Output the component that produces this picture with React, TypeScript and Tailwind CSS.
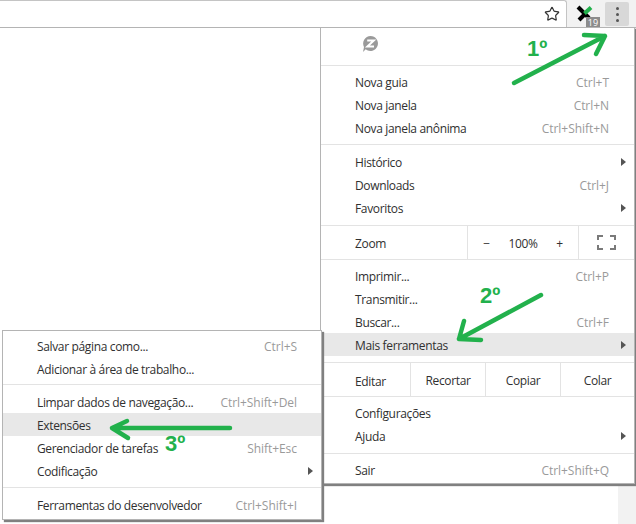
import { Star } from 'lucide-react';

interface MenuRowProps {
  label: string;
  shortcut?: string;
  arrow?: boolean;
  active?: boolean;
  inset?: string;
}

const MenuRow = ({ label, shortcut, arrow, active, inset = 'pl-[34px] pr-[25px]' }: MenuRowProps) => (
  <div className={`relative flex h-[23px] items-center justify-between pt-[2px] ${inset} ${active ? 'bg-[#e8e8e8]' : ''}`}>
    <span>{label}</span>
    {shortcut && <span className="tracking-[-0.05px] text-[#9a9a9a]">{shortcut}</span>}
    {arrow && (
      <span className="absolute right-[8px] top-[8px] h-0 w-0 border-y-[4px] border-l-[5px] border-y-transparent border-l-[#555]" />
    )}
  </div>
);

const Separator = () => <div className="h-px bg-[#e3e3e3]" />;

const Toolbar = () => (
  <div className="flex h-[28px] shrink-0 border-b border-[#b4b4b4] bg-[#f2f2f2]">
    <div className="flex h-[27px] w-[567px] items-center justify-end rounded-tr-[3px] border-t border-r border-[#c4c4c4] bg-white pr-[6px]">
      <Star size={16} strokeWidth={1.8} className="text-[#333]" />
    </div>
    <div className="relative w-[38px]">
      <svg width="24" height="20" viewBox="0 0 24 20" className="absolute left-[7px] top-[3px]">
        <path d="M4 4 L15 15" stroke="#000" strokeWidth="4" />
        <path d="M5 17 L11 11" stroke="#000" strokeWidth="4" />
        <path d="M10.5 10.5 L17 4.5" stroke="#22b14c" strokeWidth="4" />
      </svg>
      <span className="absolute left-[19px] top-[17px] flex h-[10px] w-[14px] items-center justify-center bg-[#8c8c8c] text-[9px] leading-none tracking-normal text-white">
        19
      </span>
    </div>
    <div className="mt-[2px] flex h-[24px] w-[24px] flex-col items-center justify-center gap-[3px] rounded-[2px] bg-[#d8d8d8]">
      <span className="h-[3px] w-[3px] rounded-full bg-[#555]" />
      <span className="h-[3px] w-[3px] rounded-full bg-[#555]" />
      <span className="h-[3px] w-[3px] rounded-full bg-[#555]" />
    </div>
  </div>
);

const MainMenu = () => (
  <div className="absolute left-[320px] top-[27px] w-[315px] border border-[#b4b4b4] bg-white shadow-[1px_2px_1px_#808080]">
    <div className="flex h-[37px] items-center pb-[6px] pl-[41px]">
      <svg width="17" height="18" viewBox="0 0 17 18">
        <path d="M8.5 1 a7.5 7.5 0 1 1 -4.8 13.3 L1 17 L2 12 A7.5 7.5 0 0 1 8.5 1 Z" fill="#9a9a9a" />
        <path d="M5.2 5.4 H11.8 L5.4 11.4 H12" fill="none" stroke="#fff" strokeWidth="2" />
      </svg>
    </div>
    <Separator />
    <div className="pt-[4px] pb-[5px]">
      <MenuRow label="Nova guia" shortcut="Ctrl+T" />
      <MenuRow label="Nova janela" shortcut="Ctrl+N" />
      <MenuRow label="Nova janela anônima" shortcut="Ctrl+Shift+N" />
    </div>
    <Separator />
    <div className="pt-[5px] pb-[6px]">
      <MenuRow label="Histórico" arrow />
      <MenuRow label="Downloads" shortcut="Ctrl+J" />
      <MenuRow label="Favoritos" arrow />
    </div>
    <Separator />
    <div className="flex h-[33px] items-center">
      <div className="w-[146px] pl-[34px] pt-[3px]">Zoom</div>
      <div className="flex h-full w-[112px] items-center border-x border-[#e3e3e3] pt-[3px]">
        <span className="w-[37px] text-center">−</span>
        <span className="w-[36px] text-center">100%</span>
        <span className="w-[37px] text-center">+</span>
      </div>
      <div className="flex flex-1 justify-center">
        <svg width="19" height="15" viewBox="0 0 19 15" fill="none" stroke="#7a7a7a" strokeWidth="2">
          <path d="M1 5 V1 H6 M13 1 H18 V5 M18 10 V14 H13 M6 14 H1 V10" />
        </svg>
      </div>
    </div>
    <Separator />
    <div className="pt-[4px] pb-[6px]">
      <MenuRow label="Imprimir..." shortcut="Ctrl+P" />
      <MenuRow label="Transmitir..." />
      <MenuRow label="Buscar..." shortcut="Ctrl+F" />
      <MenuRow label="Mais ferramentas" arrow active />
    </div>
    <Separator />
    <div className="flex h-[33px] items-center">
      <div className="flex h-full w-[89px] items-center pl-[34px] pt-[4px]">Editar</div>
      <div className="flex h-full w-[75px] items-center justify-center border-l border-[#e3e3e3] pt-[2px]">Recortar</div>
      <div className="flex h-full w-[75px] items-center justify-center border-l border-[#e3e3e3] pt-[2px]">Copiar</div>
      <div className="flex h-full flex-1 items-center justify-center border-l border-[#e3e3e3] pt-[2px]">Colar</div>
    </div>
    <Separator />
    <div className="pt-[4px] pb-[6px]">
      <MenuRow label="Configurações" />
      <MenuRow label="Ajuda" arrow />
    </div>
    <Separator />
    <div className="pt-[4px] pb-[2px]">
      <MenuRow label="Sair" shortcut="Ctrl+Shift+Q" />
    </div>
  </div>
);

const SubMenu = () => {
  const inset = 'pl-[34px] pr-[24px]';
  return (
    <div className="absolute left-[2px] top-[330px] w-[320px] border border-[#b4b4b4] bg-white shadow-[2px_2px_1px_#808080]">
      <div className="pt-[3px] pb-[4px]">
        <MenuRow inset={inset} label="Salvar página como..." shortcut="Ctrl+S" />
        <MenuRow inset={inset} label="Adicionar à área de trabalho..." />
      </div>
      <Separator />
      <div className="pt-[5px] pb-[5px]">
        <MenuRow inset={inset} label="Limpar dados de navegação..." shortcut="Ctrl+Shift+Del" />
        <MenuRow inset={inset} label="Extensões" active />
        <MenuRow inset={inset} label="Gerenciador de tarefas" shortcut="Shift+Esc" />
        <MenuRow inset={inset} label="Codificação" arrow />
      </div>
      <Separator />
      <div className="pt-[5px] pb-[3px]">
        <MenuRow inset={inset} label="Ferramentas do desenvolvedor" shortcut="Ctrl+Shift+I" />
      </div>
    </div>
  );
};

// setas verdes e numeros por cima dos menus
const Annotations = () => (
  <>
    <svg width="636" height="524" className="pointer-events-none absolute left-0 top-0" fill="none" stroke="#22b14c" strokeWidth="4.5" strokeLinecap="round" strokeLinejoin="round">
      <path d="M514 83 L605 36 M584 35 L605 36 L596 54" />
      <path d="M541 295 L459 339 M464 321 L459 339 L481 340" />
      <path d="M230 428 L112 428 M127 421 L112 428 L128 438" />
    </svg>
    <span className="absolute left-[527px] top-[36px] font-['Liberation_Sans',sans-serif] text-[22px] leading-[26px] font-bold tracking-normal text-[#22b14c]">1º</span>
    <span className="absolute left-[480px] top-[283px] font-['Liberation_Sans',sans-serif] text-[22px] leading-[26px] font-bold tracking-normal text-[#22b14c]">2º</span>
    <span className="absolute left-[165px] top-[431px] font-['Liberation_Sans',sans-serif] text-[22px] leading-[26px] font-bold tracking-normal text-[#22b14c]">3º</span>
  </>
);

const App = () => (
  <div className="relative flex h-[524px] w-[636px] flex-col overflow-hidden bg-white font-['Open_Sans','Noto_Sans',sans-serif] text-[12px] tracking-[-0.35px] text-[#303030]">
    <Toolbar />
    <div className="flex flex-1 justify-end">
      <div className="w-[18px] bg-[#f2f2f2]">
        <div className="ml-auto mt-[52px] h-[30px] w-[1px] bg-[#1a9ad6]" />
      </div>
    </div>
    <MainMenu />
    <SubMenu />
    <Annotations />
  </div>
);

export default App;
